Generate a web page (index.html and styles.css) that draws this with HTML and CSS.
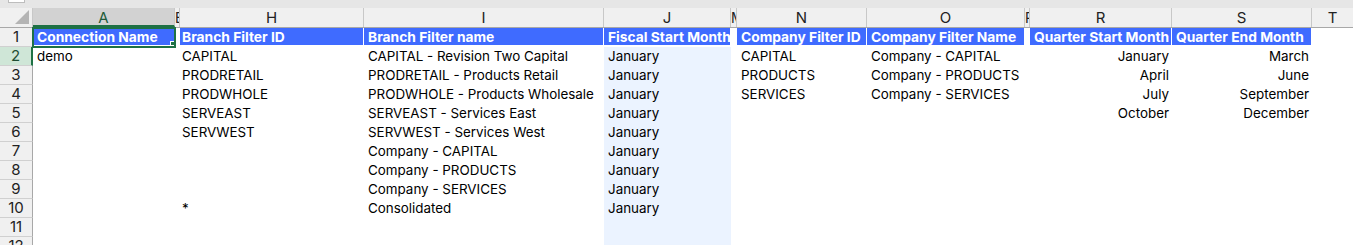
FILE: index.html
```html
<!DOCTYPE html>
<html>
<head>
<meta charset="utf-8">
<link rel="stylesheet" href="styles.css">
</head>
<body>
<div class="sheet">
  <div class="topstrip"><div class="namebox"></div></div>
  <div class="row colhdr">
    <div class="corner"><div class="tri"></div></div>
    <div class="ch sel">A</div>
    <div class="ch narrow">E</div>
    <div class="ch">H</div>
    <div class="ch">I</div>
    <div class="ch">J</div>
    <div class="ch narrow">M</div>
    <div class="ch">N</div>
    <div class="ch">O</div>
    <div class="ch narrow">P</div>
    <div class="ch">R</div>
    <div class="ch">S</div>
    <div class="ch last">T</div>
  </div>

  <div class="row">
    <div class="rh">1</div>
    <div class="c hd active">Connection Name</div>
    <div class="c"></div>
    <div class="c hd tight">Branch Filter ID</div>
    <div class="c hd">Branch Filter name</div>
    <div class="c hd">Fiscal Start Month</div>
    <div class="c"></div>
    <div class="c hd">Company Filter ID</div>
    <div class="c hd">Company Filter Name</div>
    <div class="c"></div>
    <div class="c hd">Quarter Start Month</div>
    <div class="c hd">Quarter End Month</div>
    <div class="c"></div>
  </div>

  <div class="row">
    <div class="rh rsel">2</div>
    <div class="c">demo</div><div class="c"></div>
    <div class="c tight">CAPITAL</div>
    <div class="c">CAPITAL - Revision Two Capital</div>
    <div class="c j">January</div><div class="c"></div>
    <div class="c">CAPITAL</div>
    <div class="c">Company - CAPITAL</div><div class="c"></div>
    <div class="c r">January</div>
    <div class="c r">March</div><div class="c"></div>
  </div>

  <div class="row">
    <div class="rh">3</div>
    <div class="c"></div><div class="c"></div>
    <div class="c tight">PRODRETAIL</div>
    <div class="c">PRODRETAIL - Products Retail</div>
    <div class="c j">January</div><div class="c"></div>
    <div class="c">PRODUCTS</div>
    <div class="c">Company - PRODUCTS</div><div class="c"></div>
    <div class="c r">April</div>
    <div class="c r">June</div><div class="c"></div>
  </div>

  <div class="row">
    <div class="rh">4</div>
    <div class="c"></div><div class="c"></div>
    <div class="c tight">PRODWHOLE</div>
    <div class="c">PRODWHOLE - Products Wholesale</div>
    <div class="c j">January</div><div class="c"></div>
    <div class="c">SERVICES</div>
    <div class="c">Company - SERVICES</div><div class="c"></div>
    <div class="c r">July</div>
    <div class="c r">September</div><div class="c"></div>
  </div>

  <div class="row">
    <div class="rh">5</div>
    <div class="c"></div><div class="c"></div>
    <div class="c tight">SERVEAST</div>
    <div class="c">SERVEAST - Services East</div>
    <div class="c j">January</div><div class="c"></div>
    <div class="c"></div>
    <div class="c"></div><div class="c"></div>
    <div class="c r">October</div>
    <div class="c r">December</div><div class="c"></div>
  </div>

  <div class="row">
    <div class="rh">6</div>
    <div class="c"></div><div class="c"></div>
    <div class="c tight">SERVWEST</div>
    <div class="c">SERVWEST - Services West</div>
    <div class="c j">January</div><div class="c"></div>
    <div class="c"></div><div class="c"></div><div class="c"></div>
    <div class="c"></div><div class="c"></div><div class="c"></div>
  </div>

  <div class="row">
    <div class="rh">7</div>
    <div class="c"></div><div class="c"></div>
    <div class="c"></div>
    <div class="c">Company - CAPITAL</div>
    <div class="c j">January</div><div class="c"></div>
    <div class="c"></div><div class="c"></div><div class="c"></div>
    <div class="c"></div><div class="c"></div><div class="c"></div>
  </div>

  <div class="row">
    <div class="rh">8</div>
    <div class="c"></div><div class="c"></div>
    <div class="c"></div>
    <div class="c">Company - PRODUCTS</div>
    <div class="c j">January</div><div class="c"></div>
    <div class="c"></div><div class="c"></div><div class="c"></div>
    <div class="c"></div><div class="c"></div><div class="c"></div>
  </div>

  <div class="row">
    <div class="rh">9</div>
    <div class="c"></div><div class="c"></div>
    <div class="c"></div>
    <div class="c">Company - SERVICES</div>
    <div class="c j">January</div><div class="c"></div>
    <div class="c"></div><div class="c"></div><div class="c"></div>
    <div class="c"></div><div class="c"></div><div class="c"></div>
  </div>

  <div class="row">
    <div class="rh">10</div>
    <div class="c"></div><div class="c"></div>
    <div class="c tight">*</div>
    <div class="c">Consolidated</div>
    <div class="c j">January</div><div class="c"></div>
    <div class="c"></div><div class="c"></div><div class="c"></div>
    <div class="c"></div><div class="c"></div><div class="c"></div>
  </div>

  <div class="row">
    <div class="rh">11</div>
    <div class="c"></div><div class="c"></div>
    <div class="c"></div>
    <div class="c"></div>
    <div class="c j"></div><div class="c"></div>
    <div class="c"></div><div class="c"></div><div class="c"></div>
    <div class="c"></div><div class="c"></div><div class="c"></div>
  </div>

  <div class="row">
    <div class="rh">12</div>
    <div class="c"></div><div class="c"></div>
    <div class="c"></div>
    <div class="c"></div>
    <div class="c j"></div><div class="c"></div>
    <div class="c"></div><div class="c"></div><div class="c"></div>
    <div class="c"></div><div class="c"></div><div class="c"></div>
  </div>
</div>
</body>
</html>
```

FILE: styles.css
```css
html, body {
  margin: 0;
  padding: 0;
  background: #ffffff;
  overflow: hidden;
}
.sheet {
  width: 1353px;
  font-family: "Inter", "Liberation Sans", sans-serif;
  color: #000;
}
.topstrip {
  height: 8px;
  background: #e6e6e6;
  position: relative;
}
.namebox {
  position: absolute;
  left: 8px;
  top: 0;
  width: 15px;
  height: 2px;
  border: 1px solid #bdbdbd;
  border-top: none;
  background: #fff;
}
.row {
  display: grid;
  grid-template-columns: 33px 142px 5px 184px 240px 127px 6px 130px 158px 5px 142px 140px 41px;
  height: 19px;
}
.colhdr {
  height: 20px;
  background: #f0f0f0;
  border-bottom: 1px solid #a8a8a8;
  box-sizing: border-box;
}
.corner {
  position: relative;
  border-right: 1px solid #c8c8c8;
}
.tri {
  position: absolute;
  right: 3px;
  bottom: 3px;
  width: 0;
  height: 0;
  border-left: 14px solid transparent;
  border-bottom: 14px solid #b4b4b4;
}
.ch {
  font-size: 15px;
  line-height: 19px;
  text-align: center;
  color: #222;
  border-right: 1px solid #c8c8c8;
  overflow: hidden;
  white-space: nowrap;
}
.ch.sel {
  background: #d2d2d2;
  color: #1f5c3a;
  border-bottom: 2px solid #1e7145;
}
.ch.narrow {
  text-align: left;
  font-size: 14px;
}
.ch.last {
  border-right: none;
}
.rh {
  background: #f0f0f0;
  border-right: 1px solid #a8a8a8;
  border-bottom: 1px solid #d0d0d0;
  font-size: 15px;
  line-height: 18px;
  text-align: center;
  color: #222;
}
.rh.rsel {
  background: #cfe6d7;
  color: #1f4d33;
  border-right: 2px solid #1e7145;
}
.c {
  font-size: 13.4px;
  line-height: 19px;
  padding-left: 4px;
  white-space: nowrap;
  overflow: hidden;
  position: relative;
}
.c.tight {
  padding-left: 2px;
}
.c.r {
  text-align: right;
  padding-left: 0;
  padding-right: 3px;
}
.c.j {
  background: #ebf3ff;
}
.c.hd {
  background: #3f6bff;
  color: #ffffff;
  font-weight: 700;
  font-size: 13.8px;
  letter-spacing: 0;
  border-right: 1px solid #fff;
  border-bottom: 2px solid #fff;
  line-height: 17px;
  padding-top: 1px;
}
.c.active {
  outline: 2px solid #1e7145;
  outline-offset: -1px;
  z-index: 2;
}
.c.active::after {
  content: "";
  position: absolute;
  right: -3px;
  bottom: -3px;
  width: 5px;
  height: 5px;
  background: #1e7145;
  border: 1px solid #fff;
}
```
